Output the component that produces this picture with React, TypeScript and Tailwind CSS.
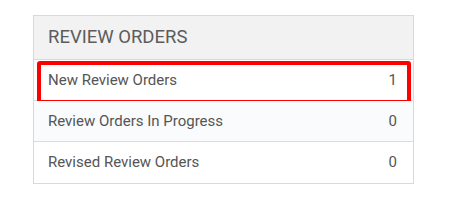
const rows = [
  { label: "New Review Orders", count: 1, highlight: true },
  { label: "Review Orders In Progress", count: 0 },
  { label: "Revised Review Orders", count: 0 },
];

export default function App() {
  return (
    <div className="h-[204px] w-[453px] bg-white pl-[33px] pt-[15px] font-['Roboto',sans-serif]">
      <div className="w-[381px] border border-[#d9d9d9]">
        <div className="flex h-[44px] items-center border-b border-[#d9d9d9] bg-[#f2f2f2] px-[14px] text-[18.5px] text-[#5c5c5c]">
          REVIEW ORDERS
        </div>
        {rows.map((r, i) => (
          <div
            key={r.label}
            className={
              "relative flex h-[41px] items-center justify-between border-b border-[#dcdcdc] px-[14px] text-[15px] text-[#555555] last:border-b-0 " +
              (i % 2 === 1 ? "bg-[#f9fbfd]" : "bg-white")
            }
          >
            <span>{r.label}</span>
            <span className="pr-[2px]">{r.count}</span>
            {r.highlight && (
              <div className="absolute left-[3px] top-[1px] h-[43px] w-[374px] rounded-[3px] border-[4.5px] border-[#ff0000]" />
            )}
          </div>
        ))}
      </div>
    </div>
  );
}
